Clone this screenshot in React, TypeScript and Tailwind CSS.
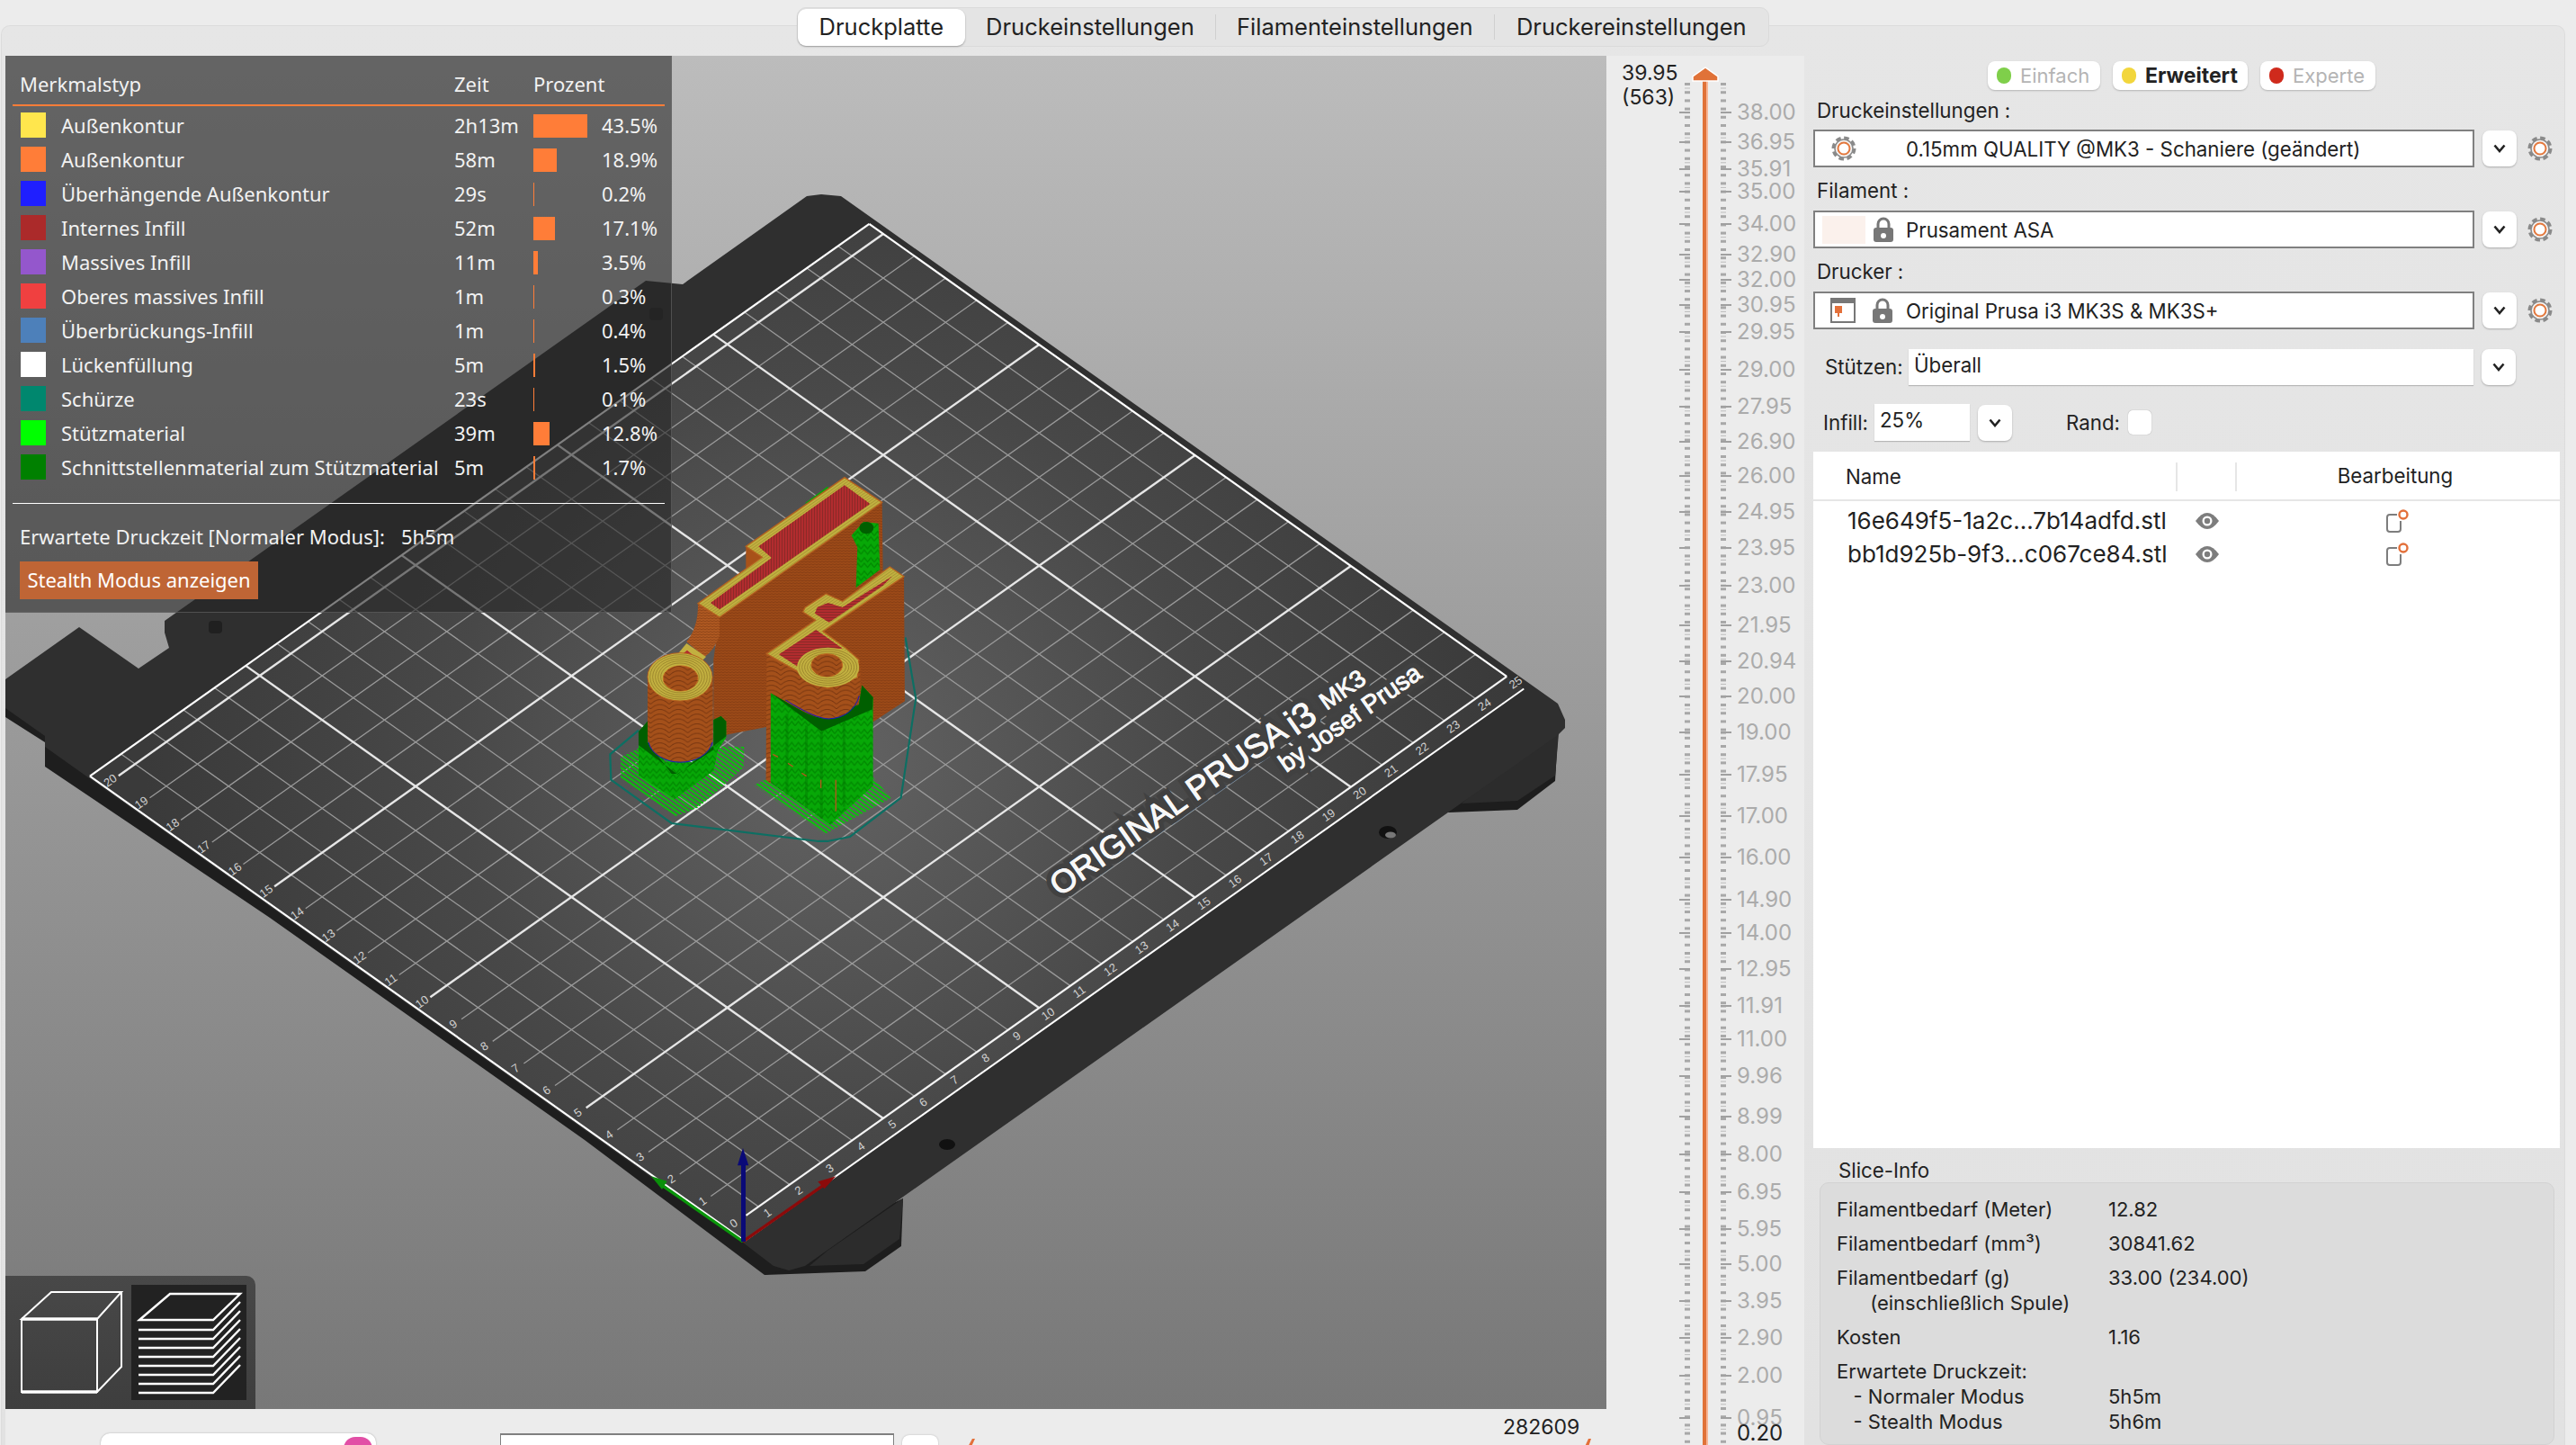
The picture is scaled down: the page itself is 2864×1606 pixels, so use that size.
import React from "react";

const AX = 808.7, AY = 1365.7;
const P = (x: number, y: number): [number, number] => [AX + x * 34.66 - y * 34.66, AY - x * 24.55 - y * 24.6];
const pts = (a: [number, number][]) => a.map((p) => p.join(",")).join(" ");
const L = ({ a, b, c, w }: { a: [number, number]; b: [number, number]; c: string; w: number }) => (
  <line x1={a[0]} y1={a[1]} x2={b[0]} y2={b[1]} stroke={c} strokeWidth={w} />
);
const range = (a: number, b: number) => Array.from({ length: b - a + 1 }, (_, i) => a + i);

const Rim = ({ cx, cy, rx, ry }: { cx: number; cy: number; rx: number; ry: number }) => (
  <g fill="none" stroke="#96802a" strokeWidth="2.5">
    {[0, 1, 2, 3, 4].map((i) => (
      <ellipse key={i} cx={cx} cy={cy} rx={rx - 8 - i * 9} ry={ry - 6 - i * 7} />
    ))}
  </g>
);

function Model() {
  return (
    <g transform="translate(620 500) scale(0.3333)">
      <polyline
        points="270,935 175,1015 178,1100 380,1245 870,1305 900,1305 975,1290 1145,1160 1190,860 1195,830 1160,625"
        fill="none"
        stroke="#0d6f63"
        strokeWidth="6.5"
      />
      <polygon points="210,1025 290,985 622,990 620,1060 470,1192 392,1222 210,1095" fill="url(#hatch)" />
      <polygon points="655,1118 690,1100 1050,1090 1112,1160 890,1282" fill="url(#hatch)" />
      <polygon points="825,178 900,122 905,128 840,182" fill="#0aa60a" />
      <polygon points="540,558 1082,175 1085,420 1085,700 1158,835 560,950 520,900 520,700" fill="#9c4a18" />
      <polygon points="540,558 1082,175 1085,420 1085,700 1158,835 560,950 520,900 520,700" fill="url(#wave)" />
      <path d="M980,285 L1020,240 L1070,245 L1075,400 L995,460 L1000,325 Z" fill="url(#sup)" />
      <ellipse cx="1030" cy="260" rx="24" ry="20" fill="#005f00" />
      <polygon points="628,322 682,358 628,397" fill="#a85219" />
      <path d="M468,512 L540,558 L540,620 Q520,670 490,690 L430,640 Q470,590 468,512 Z" fill="#b05a22" />
      <path d="M468,512 L540,558 L540,620 Q520,670 490,690 L430,640 Q470,590 468,512 Z" fill="url(#wave)" />
      <polygon points="957,92 628,322 682,358 468,512 540,558 1082,175" fill="url(#rimp)" stroke="#b5611f" strokeWidth="4" />
      <polygon points="957,118 670,322 714,360 510,510 540,532 1042,180" fill="#b22c2e" />
      <polygon points="957,118 670,322 714,360 510,510 540,532 1042,180" fill="url(#vred)" />

      <path d="M270,1085 L270,940 L300,905 L300,975 L360,1040 L450,1042 L520,985 L520,900 L545,888 L562,905 L562,960 L535,1000 L520,1070 L390,1165 Z" fill="url(#sup)" />
      <path d="M270,985 L270,940 L300,905 L300,975 L380,1080 L400,1080 L520,1000 L520,900 L545,888 L562,905 L562,955 L400,1082 Z" fill="#005f00" />
      <path d="M300,755 L300,960 A108,80 0 0 0 518,960 L518,755 Z" fill="#a4501a" />
      <path d="M300,755 L300,960 A108,80 0 0 0 518,960 L518,755 Z" fill="url(#arch)" />
      <path d="M303,975 A108,80 0 0 0 516,975" fill="none" stroke="#1818c0" strokeWidth="3" />
      <polygon points="378,708 430,645 495,690 455,730" fill="#c2b040" />
      <polygon points="382,708 432,668 470,700 445,712 410,703" fill="#b22c2e" />
      <ellipse cx="408" cy="757" rx="108" ry="80" fill="#c2b040" stroke="#b5611f" strokeWidth="3" />
      <Rim cx={408} cy={757} rx={108} ry={80} />
      <ellipse cx="410" cy="762" rx="58" ry="42" fill="#a4501a" stroke="#c46a20" strokeWidth="3" />
      <ellipse cx="410" cy="762" rx="58" ry="42" fill="url(#arch)" />

      <polygon points="885,605 1155,420 1158,838 1050,908 1000,760 960,640" fill="#9c4a18" />
      <polygon points="885,605 1155,420 1158,838 1050,908 1000,760 960,640" fill="url(#wave)" />
      <polygon points="710,810 880,890 1005,850 1015,785 1052,825 1052,1120 910,1250 710,1110" fill="url(#sup)" />
      <g stroke="#006f00" strokeWidth="9" opacity="0.35">
        <line x1="765" y1="880" x2="765" y2="1150" />
        <line x1="830" y1="920" x2="830" y2="1195" />
        <line x1="880" y1="940" x2="880" y2="1230" />
        <line x1="955" y1="910" x2="955" y2="1190" />
      </g>
      <polygon points="710,810 800,860 880,895 1005,850 1015,785 1052,825 1050,865 880,938" fill="#005f00" />
      <path d="M697,680 L695,1100 L710,1112 L710,810 L800,862 Q860,897 905,897 Q1002,890 1010,780 L1010,720 L900,660 Z" fill="#a4501a" />
      <path d="M697,680 L695,1100 L710,1112 L710,810 L800,862 Q860,897 905,897 Q1002,890 1010,780 L1010,720 L900,660 Z" fill="url(#arch)" />
      <path d="M760,834 Q860,897 905,897 Q985,892 1006,820" fill="none" stroke="#1818c0" strokeWidth="3" />
      <path d="M697,680 L860,568 L818,540 L826,525 L895,480 L950,505 L1108,390 L1155,422 L885,605 L960,660 L1005,700 L1000,760 L900,795 Z" fill="url(#rimp)" stroke="#b5611f" strokeWidth="4" />
      <polygon points="738,682 862,600 950,662 860,672 825,718 800,722" fill="#b22c2e" />
      <polygon points="738,682 862,600 950,662 860,672 825,718 800,722" fill="url(#hred)" />
      <polygon points="866,525 902,510 950,525 1115,422 1085,452 950,545 905,575 858,545" fill="#b22c2e" />
      <polygon points="866,525 902,510 950,525 1115,422 1085,452 950,545 905,575 858,545" fill="url(#hred)" />
      <ellipse cx="902" cy="725" rx="104" ry="66" fill="#c2b040" />
      <Rim cx={902} cy={725} rx={104} ry={66} />
      <ellipse cx="898" cy="718" rx="52" ry="38" fill="#a4501a" stroke="#c46a20" strokeWidth="3" />
      <ellipse cx="898" cy="718" rx="52" ry="38" fill="url(#arch)" />
      <g stroke="#b5561c" strokeWidth="4">
        <line x1="718" y1="1015" x2="735" y2="1024" />
        <line x1="768" y1="1045" x2="785" y2="1056" />
        <line x1="814" y1="1078" x2="830" y2="1088" />
        <line x1="878" y1="1100" x2="878" y2="1128" />
        <line x1="928" y1="1100" x2="928" y2="1205" />
      </g>
      <path d="M470,1192 L595,1105" stroke="#ffffff" strokeWidth="3" strokeDasharray="5 5" />
    </g>
  );
}

function Scene() {
  const corners: [number, number][] = [P(0, 20.45), P(25, 20.45), P(25, -0.55), P(0, -0.55)];
  const textStyle = { paintOrder: "stroke" as const, fontFamily: '"Liberation Sans", sans-serif' };
  const brand = [
    { t: "translate(1178 997) rotate(-35)", s: 36, txt: "ORIGINAL PRUSA", len: 312 },
    { t: "translate(1441 818) rotate(-35)", s: 40, txt: "i3" },
    { t: "translate(1475 790) rotate(-35)", s: 27, txt: "MK3" },
    { t: "translate(1430 859) rotate(-35)", s: 28, txt: "by Josef Prusa", len: 186 },
  ];
  return (
    <svg viewBox="6 62 1780 1504" className="absolute inset-0 h-[1504px] w-[1780px]">
      <defs>
        <radialGradient id="glow" gradientUnits="userSpaceOnUse" cx="920" cy="840" r="760">
          <stop offset="0" stopColor="#636363" />
          <stop offset="0.55" stopColor="#484848" />
          <stop offset="1" stopColor="#3a3a3a" />
        </radialGradient>
        <pattern id="hatch" width="12" height="12" patternUnits="userSpaceOnUse" patternTransform="rotate(35)">
          <rect width="12" height="6" fill="#0ac40a" />
        </pattern>
        <pattern id="sup" width="44" height="44" patternUnits="userSpaceOnUse">
          <rect width="44" height="44" fill="#07a807" />
          <path d="M0 22 L11 8 L22 22 L33 8 L44 22 M0 40 L11 26 L22 40 L33 26 L44 40" stroke="#018a01" strokeWidth="4" fill="none" />
        </pattern>
        <pattern id="wave" width="12" height="9" patternUnits="userSpaceOnUse">
          <path d="M0 6 L6 2 L12 6" stroke="#783610" strokeWidth="2" fill="none" />
        </pattern>
        <pattern id="arch" width="62" height="16" patternUnits="userSpaceOnUse">
          <path d="M0 16 Q31 -14 62 16" stroke="#783610" strokeWidth="3" fill="none" />
        </pattern>
        <pattern id="vred" width="9" height="9" patternUnits="userSpaceOnUse">
          <rect width="3" height="9" fill="#8a2a28" />
        </pattern>
        <pattern id="hred" width="9" height="9" patternUnits="userSpaceOnUse">
          <rect width="9" height="3" fill="#8a2a28" />
        </pattern>
        <pattern id="rimp" width="8" height="8" patternUnits="userSpaceOnUse" patternTransform="rotate(-35)">
          <rect width="8" height="8" fill="#c2b040" />
          <rect width="8" height="2" fill="#a09030" />
        </pattern>
      </defs>
      <polygon points="1611,903 1687,900 1729,868 1732,818 1600,900" fill="#1d1d1d" />
      <polygon points="1625,893 1687,890 1729,862 1733,815 1640,880" fill="#2c2c2c" />
      <polygon points="850,1417 962,1413 1002,1385 1004,1332 860,1400" fill="#1d1d1d" />
      <polygon points="900,1407 960,1405 1000,1377 1004,1332 920,1390" fill="#2c2c2c" />
      <polygon points="6,755 6,797 50,825 50,852 300,1020 650,1267 850,1417 900,1405 900,1370 100,800" fill="#1e1e1e" />
      <polygon
        points="897,218 913,216 935,218 1732,782 1740,800 1740,809 1732,817 895,1407 877,1412 860,1407 826,1381 50,830 50,818 6,787 6,755 88,697 154,743 188,720 183,703 183,690 718,312 759,316"
        fill="#2f2f2f"
      />
      <polygon points={pts(corners)} fill="url(#glow)" />
      {range(1, 24).filter((i) => i % 5).map((i) => (
        <L key={i} a={P(i, 0)} b={P(i, 20.45)} c="#9a9a9a" w={1.3} />
      ))}
      {range(1, 19).filter((i) => i % 5).map((i) => (
        <L key={i} a={P(0.47, i)} b={P(25, i)} c="#9a9a9a" w={1.3} />
      ))}
      {[5, 10, 15, 20].map((i) => (
        <L key={i} a={P(i, 0)} b={P(i, 20.45)} c="#e6e6e6" w={2.4} />
      ))}
      {[5, 10, 15, 20].map((i) => (
        <L key={i} a={P(0.47, i)} b={P(25, i)} c="#e6e6e6" w={2.4} />
      ))}
      <L a={P(0.6, 0)} b={P(25, 0)} c="#f4f4f4" w={2.2} />
      <L a={corners[0]} b={corners[1]} c="#ffffff" w={2.2} />
      <L a={corners[1]} b={P(25, 0)} c="#ffffff" w={2.2} />
      <L a={corners[0]} b={corners[3]} c="#ffffff" w={2.2} />
      <L a={corners[3]} b={corners[2]} c="#ffffff" w={2} />
      {range(1, 25).map((i) => {
        const [x, y] = P(i, -0.3);
        return (
          <text key={i} x={x} y={y} fontSize="13" fill="#d0d0d0" textAnchor="middle" dominantBaseline="middle" transform={`rotate(-35 ${x} ${y})`} style={textStyle}>
            {i}
          </text>
        );
      })}
      {range(0, 20).map((i) => {
        const [x, y] = P(0.22, i);
        return (
          <text key={i} x={x} y={y} fontSize="13" fill="#d0d0d0" textAnchor="middle" dominantBaseline="middle" transform={`rotate(-35 ${x} ${y})`} style={textStyle}>
            {i}
          </text>
        );
      })}
      <g fill="none" stroke="#414141" strokeWidth="12" style={textStyle} aria-hidden="true">
        {brand.map((b) => (
          <path key={b.txt} d="" />
        ))}
      </g>
      <g fill="#f8f8f8" strokeWidth="12" style={textStyle}>
        {brand.map((b) => (
          <text key={b.txt} transform={b.t} fontSize={b.s} textLength={b.len} lengthAdjust="spacingAndGlyphs" stroke="#414141">
            {b.txt}
          </text>
        ))}
      </g>
      <g fill="#f8f8f8" stroke="#f8f8f8" strokeWidth="0.9" style={textStyle} aria-hidden="true">
        {brand.map((b) => (
          <text key={b.txt} transform={b.t} fontSize={b.s} textLength={b.len} lengthAdjust="spacingAndGlyphs">
            {b.txt}
          </text>
        ))}
      </g>
      <ellipse cx="1543" cy="925" rx="10" ry="7" fill="#111" />
      <ellipse cx="1546" cy="928" rx="6" ry="3.5" fill="#777" />
      <ellipse cx="1053" cy="1272" rx="9" ry="6" fill="#111" />
      <rect x="232" y="690" width="15" height="14" rx="4" fill="#202020" />
      <rect x="722" y="342" width="15" height="14" rx="4" fill="#232323" />
      <Model />
      <g transform="translate(650 1150) scale(0.3333)">
        <line x1="528" y1="690" x2="258" y2="502" stroke="#0a960a" strokeWidth="10" />
        <polygon points="222,472 275,488 258,516" fill="#0a900a" />
        <line x1="528" y1="690" x2="795" y2="503" stroke="#8c0a0a" strokeWidth="10" />
        <polygon points="838,472 778,490 800,514" fill="#8c0a0a" />
        <rect x="522" y="430" width="15" height="260" fill="#0a0a78" />
        <polygon points="528,378 547,436 510,436" fill="#0a0a78" />
      </g>
    </svg>
  );
}

const legend = [
  ["#ffe64d", "Außenkontur", "2h13m", 60, "43.5%"],
  ["#ff7d38", "Außenkontur", "58m", 26, "18.9%"],
  ["#1f1fff", "Überhängende Außenkontur", "29s", 1, "0.2%"],
  ["#ab2a2a", "Internes Infill", "52m", 24, "17.1%"],
  ["#9457cc", "Massives Infill", "11m", 5, "3.5%"],
  ["#f04040", "Oberes massives Infill", "1m", 1, "0.3%"],
  ["#4d80ba", "Überbrückungs-Infill", "1m", 1, "0.4%"],
  ["#ffffff", "Lückenfüllung", "5m", 2, "1.5%"],
  ["#00876e", "Schürze", "23s", 1, "0.1%"],
  ["#00ff00", "Stützmaterial", "39m", 18, "12.8%"],
  ["#008000", "Schnittstellenmaterial zum Stützmaterial", "5m", 2, "1.7%"],
] as const;

function Legend() {
  return (
    <div className="absolute left-0 top-0 h-[619px] w-[741px] border-r border-b border-[#6a6a6a]/60 bg-[#252525]/[.585] font-['Noto_Sans',sans-serif] text-[22px] text-[#f2f2f2]">
      <div className="flex h-[54px] items-end pb-[8px] pl-[16px] leading-[30px]">
        <span className="w-[483px]">Merkmalstyp</span>
        <span className="w-[88px]">Zeit</span>
        <span>Prozent</span>
      </div>
      <div className="mx-[8px] h-[1.5px] w-[725px] bg-[#ff7d38]" />
      <div className="mt-[3px]">
        {legend.map(([c, name, time, w, pct]) => (
          <div key={name + time} className="flex h-[38px] items-center pl-[17px]">
            <div className="mb-[1px] h-[28px] w-[28px]" style={{ backgroundColor: c }} />
            <span className="ml-[17px] w-[437px] whitespace-nowrap">{name}</span>
            <span className="w-[88px]">{time}</span>
            <div className="w-[76px]">
              <div className="h-[26px] bg-[#ff7d38]" style={{ width: w }} />
            </div>
            <span>{pct}</span>
          </div>
        ))}
      </div>
      <div className="mx-[8px] mt-[20px] h-[1.5px] w-[725px] bg-white" />
      <div className="ml-[16px] mt-[16px] flex h-[40px] items-center whitespace-pre">
        <span className="w-[424px]">Erwartete Druckzeit [Normaler Modus]:</span>
        <span>5h5m</span>
      </div>
      <div className="ml-[16px] mt-[8px] flex h-[42px] w-[265px] items-center justify-center bg-[#bf6535] pb-[2px] text-white">Stealth Modus anzeigen</div>
    </div>
  );
}

function ViewToggle() {
  const layers = [1478, 1488, 1498, 1508, 1518, 1528, 1538, 1548];
  return (
    <div className="absolute bottom-0 left-0 h-[148px] w-[278px] rounded-tr-[10px] bg-gradient-to-b from-[#484848] to-[#3e3e3e]">
      <svg viewBox="6 1418 278 148" className="h-[148px] w-[278px]">
        <g fill="none" stroke="#fff">
          <path d="M24 1466 L57 1436 L135 1436 L108 1466 Z" strokeWidth="2" />
          <path d="M24 1466 L108 1466" strokeWidth="3.5" />
          <path d="M24 1466 L24 1547 L108 1547 L108 1466 M135 1436 L135 1519 L108 1547" strokeWidth="2" />
          <path d="M24 1547 L108 1547" strokeWidth="3.5" />
        </g>
        <rect x="146" y="1428" width="128" height="128" fill="#222" />
        <g fill="none" stroke="#fff" strokeWidth="2.4">
          <path d="M155 1467 L189 1438 L267 1438 L237 1467 Z" />
          {layers.map((y) => (
            <path key={y} d={`M154 ${y} L237 ${y} L267 ${y - 31}`} />
          ))}
        </g>
      </svg>
    </div>
  );
}

const sliderLabels: [string, number][] = [
  ["38.00", 124], ["36.95", 157], ["35.91", 187], ["35.00", 212], ["34.00", 248], ["32.90", 282], ["32.00", 310], ["30.95", 338], ["29.95", 368],
  ["29.00", 410], ["27.95", 451], ["26.90", 490], ["26.00", 528], ["24.95", 568], ["23.95", 608], ["23.00", 650], ["21.95", 694], ["20.94", 734],
  ["20.00", 773], ["19.00", 813], ["17.95", 860], ["17.00", 906], ["16.00", 952], ["14.90", 999], ["14.00", 1036], ["12.95", 1076], ["11.91", 1117],
  ["11.00", 1154], ["9.96", 1195], ["8.99", 1240], ["8.00", 1282], ["6.95", 1324], ["5.95", 1365], ["5.00", 1404], ["3.95", 1445], ["2.90", 1486],
  ["2.00", 1528], ["0.95", 1575],
];

function Slider() {
  const dashes = range(0, 166).map((i) => 92 + i * 9.2);
  return (
    <div className="relative h-[1544px] w-[220px] shrink-0 bg-[#ececec]">
      <svg viewBox="1786 62 220 1544" className="absolute inset-0 h-[1544px] w-[220px] font-['Inter',sans-serif]">
        {dashes.map((y, i) => (
          <g key={y} fill="#a8a8a8">
            <rect x="1873" y={y} width="6" height="3" />
            <rect x="1913" y={y} width="6" height="3" />
            {i % 3 === 0 && (
              <>
                <rect x="1873" y={y + 5.5} width="6" height="1" fill="#bdbdbd" />
                <rect x="1913" y={y + 5.5} width="6" height="1" fill="#bdbdbd" />
              </>
            )}
          </g>
        ))}
        {sliderLabels.map(([t, y]) => (
          <g key={t}>
            <rect x="1867" y={y} width="12" height="2" fill="#a0a0a0" />
            <rect x="1913" y={y} width="12" height="2" fill="#a0a0a0" />
            <text x="1931" y={y + 9} fontSize="24" fill="#ababab">{t}</text>
          </g>
        ))}
        <text x="1931" y="1601" fontSize="24" fill="#222">0.20</text>
        <rect x="1893" y="90" width="4" height="1516" fill="#e07238" />
        <rect x="1897" y="90" width="2" height="1516" fill="#f7b595" />
        <polygon points="1896,75 1882,85 1882,90 1910,90 1910,85" fill="#e07238" stroke="#fff" strokeWidth="1.5" />
        <text x="1803" y="89" fontSize="23" fill="#222">39.95</text>
        <text x="1803" y="116" fontSize="23" fill="#222">(563)</text>
      </svg>
    </div>
  );
}

const Gear = () => (
  <svg viewBox="0 0 28 28" className="h-[28px] w-[28px]">
    <circle cx="14" cy="14" r="11.5" fill="none" stroke="#8a8a8a" strokeWidth="4" strokeDasharray="5.5 3.5" />
    <circle cx="14" cy="14" r="10" fill="#f4f4f4" stroke="#8a8a8a" strokeWidth="1.5" />
    <circle cx="14" cy="14" r="6.5" fill="#fff" stroke="#e3783d" strokeWidth="2" />
  </svg>
);
const Lock = () => (
  <svg viewBox="0 0 24 28" className="h-[28px] w-[24px]">
    <path d="M6 13 V8 a6 6 0 0 1 12 0 V13" fill="none" stroke="#777" strokeWidth="3" />
    <rect x="1" y="12" width="22" height="16" rx="3" fill="#777" />
    <circle cx="12" cy="21" r="3" fill="#fff" />
  </svg>
);
const PrinterIcon = () => (
  <svg viewBox="0 0 28 28" className="h-[28px] w-[28px]">
    <rect x="1" y="1" width="26" height="26" fill="#fff" stroke="#777" strokeWidth="2" />
    <rect x="1" y="1" width="26" height="5" fill="#777" />
    <rect x="5" y="9" width="8" height="8" fill="#e3703a" />
    <rect x="8" y="17" width="2" height="4" fill="#e3703a" />
  </svg>
);
const Chevron = () => (
  <svg viewBox="0 0 14 10" className="h-[10px] w-[14px]">
    <path d="M1.5 1.5 L7 8 L12.5 1.5" fill="none" stroke="#222" strokeWidth="2.6" />
  </svg>
);
const Eye = () => (
  <svg viewBox="0 0 28 20" className="h-[20px] w-[28px]">
    <path d="M1 10 Q14 -8 27 10 Q14 28 1 10 Z" fill="#7d7d7d" />
    <circle cx="14" cy="10" r="5.5" fill="#fff" />
    <circle cx="14" cy="10" r="3.2" fill="#7d7d7d" />
  </svg>
);
const EditIcon = () => (
  <svg viewBox="0 0 28 26" className="h-[26px] w-[28px]">
    <path d="M14 6 H6 a3 3 0 0 0 -3 3 V22 a3 3 0 0 0 3 3 H15 a3 3 0 0 0 3 -3 V13" fill="none" stroke="#7d7d7d" strokeWidth="2" />
    <circle cx="21" cy="6" r="4.5" fill="#fff" stroke="#e3703a" strokeWidth="2.4" />
  </svg>
);

const DropBtn = ({ h = "h-[40px]" }: { h?: string }) => (
  <button className={`ml-[9px] flex w-[38px] items-center justify-center rounded-[8px] bg-white shadow-[0_1px_2px_rgba(0,0,0,0.25)] ${h}`}>
    <Chevron />
  </button>
);

function Preset({ icon, text }: { icon: React.ReactNode; text: string }) {
  return (
    <div className="flex items-center">
      <div className="flex h-[42px] w-[735px] items-center border-[2.5px] border-[#808080] bg-white text-[22.3px] leading-none">
        <div className="flex h-full w-[101px] shrink-0 items-center">{icon}</div>
        <span className="pt-[2px]">{text}</span>
      </div>
      <DropBtn />
      <div className="ml-[12px]">
        <Gear />
      </div>
    </div>
  );
}

const Mode = ({ dot, text, active, w }: { dot: string; text: string; active?: boolean; w: string }) => (
  <div className={`flex h-[32px] items-center gap-[10px] rounded-[8px] bg-white pl-[10px] shadow-[0_1px_2px_rgba(0,0,0,0.22)] ${w} ${active ? "text-[23px] font-bold text-[#222]" : "text-[22px] text-[#b4b4b4]"}`}>
    <span className={`h-[18px] w-[16px] shrink-0 rounded-full ${dot}`} />
    {text}
  </div>
);

const info: [string, string, string][] = [
  ["Filamentbedarf (Meter)", "12.82", ""],
  ["Filamentbedarf (mm³)", "30841.62", "mt-[10px]"],
  ["Filamentbedarf (g)", "33.00 (234.00)", "mt-[10px]"],
  ["      (einschließlich Spule)", "", ""],
  ["Kosten", "1.16", "mt-[10px]"],
  ["Erwartete Druckzeit:", "", "mt-[10px]"],
  ["   - Normaler Modus", "5h5m", ""],
  ["   - Stealth Modus", "5h6m", ""],
];

function RightPanel() {
  return (
    <div className="flex h-[1544px] w-[846px] shrink-0 flex-col overflow-hidden pl-[10px] text-[22.3px] leading-none text-[#222]">
      <div className="ml-[194px] mt-[6px] flex gap-[14px]">
        <Mode dot="bg-[#7fcf4a]" text="Einfach" w="w-[125px]" />
        <Mode dot="bg-[#f2d63c]" text="Erweitert" active w="w-[150px]" />
        <Mode dot="bg-[#cf2a1c]" text="Experte" w="w-[128px]" />
      </div>
      <div className="flex h-[44px] items-center pl-[4px] pt-[2px]">Druckeinstellungen :</div>
      <Preset text="0.15mm QUALITY @MK3 - Schaniere (geändert)" icon={<div className="ml-[18px]"><Gear /></div>} />
      <div className="flex h-[48px] items-center pl-[4px] pt-[5px]">Filament :</div>
      <Preset
        text="Prusament ASA"
        icon={
          <div className="ml-[8px] flex items-center gap-[8px]">
            <div className="h-[31px] w-[48px] bg-[#fbf1ec]" />
            <Lock />
          </div>
        }
      />
      <div className="flex h-[48px] items-center pl-[4px] pt-[4px]">Drucker :</div>
      <Preset
        text="Original Prusa i3 MK3S & MK3S+"
        icon={
          <div className="ml-[17px] flex items-center gap-[18px]">
            <PrinterIcon />
            <Lock />
          </div>
        }
      />
      <div className="mt-[22px] flex h-[40px] items-center pl-[13px]">
        <span className="w-[93px]">Stützen:</span>
        <div className="h-[40px] w-[628px] bg-white pl-[6px] pt-[7px] shadow-[0_1px_1px_rgba(0,0,0,0.2)]">Überall</div>
        <DropBtn />
      </div>
      <div className="mt-[21px] flex h-[41px] items-center pl-[11px]">
        <span className="w-[57px] pt-[1px]">Infill:</span>
        <div className="h-[41px] w-[106px] bg-white pl-[6px] pt-[7px] shadow-[0_1px_1px_rgba(0,0,0,0.2)]">25%</div>
        <DropBtn />
        <span className="ml-[60px] w-[69px] pt-[1px]">Rand:</span>
        <div className="h-[27px] w-[26px] rounded-[5px] bg-white shadow-[0_0_1px_rgba(0,0,0,0.4)]" />
      </div>
      <div className="mt-[12px] h-[774px] w-[830px] bg-white">
        <div className="flex h-[55px] items-center border-b-2 border-[#e6e6e6] pt-[2px]">
          <span className="w-[405px] border-r-2 border-[#e6e6e6] py-[6px] pl-[36px] leading-[20px]">Name</span>
          <span className="h-[32px] w-[66px] border-r-2 border-[#e6e6e6]" />
          <span className="w-[352px] text-center">Bearbeitung</span>
        </div>
        {["16e649f5-1a2c...7b14adfd.stl", "bb1d925b-9f3...c067ce84.stl"].map((n, i) => (
          <div key={n} className={`flex h-[37px] items-center ${i === 0 ? "mt-[3px]" : ""}`}>
            <span className="w-[424px] pl-[38px] text-[26px]">{n}</span>
            <Eye />
            <div className="ml-[183px]">
              <EditIcon />
            </div>
          </div>
        ))}
      </div>
      <div className="ml-[28px] mt-[17px] h-[21px] leading-[16px]">Slice-Info</div>
      <div className="ml-[7px] w-[817px] grow rounded-[10px] border border-[#d2d2d2] bg-[#dcdcdc] pl-[18px] pt-[15px] text-[22px]">
        {info.map(([k, v, m]) => (
          <div key={k} className={`flex h-[28px] items-center whitespace-pre ${m}`}>
            <span className="w-[302px]">{k}</span>
            <span>{v}</span>
          </div>
        ))}
      </div>
    </div>
  );
}

function BottomStrip() {
  return (
    <div className="flex h-[40px] items-start overflow-hidden bg-[#ececec] font-['Inter',sans-serif]">
      <div className="relative ml-[106px] mt-[27px] h-[30px] w-[306px] rounded-[10px] bg-white shadow-[0_0_2px_rgba(0,0,0,0.3)]">
        <span className="absolute right-[4px] top-[4px] h-[26px] w-[32px] rounded-full bg-[#e24fa6]" />
      </div>
      <div className="ml-[138px] mt-[27px] h-[30px] w-[438px] border-x border-t-2 border-[#808080] bg-white" />
      <div className="ml-[9px] mt-[29px] h-[30px] w-[40px] rounded-[8px] bg-white shadow-[0_0_2px_rgba(0,0,0,0.25)]" />
      <svg viewBox="0 0 12 12" className="ml-[30px] mt-[32px] h-[12px] w-[12px]">
        <path d="M2 12 L8 1 L11 1 L6 12 Z" fill="#e3703a" />
      </svg>
      <span className="ml-[586px] mt-[5px] text-[23px] leading-[30px] text-[#222]">282609</span>
      <svg viewBox="0 0 10 10" className="ml-[4px] mt-[32px] h-[10px] w-[10px]">
        <path d="M2 10 L6 1 L9 1 L6 10 Z" fill="#e3703a" />
      </svg>
    </div>
  );
}

export default function App() {
  return (
    <div className="relative h-[1606px] w-[2864px] overflow-hidden bg-[#ececec] font-['Inter',sans-serif]">
      <div className="absolute left-[886px] top-[8px] z-10 flex h-[44px] w-[1081px] items-center rounded-[10px] border border-[#dadada] bg-[#e4e4e4] text-[25.5px] leading-none text-[#222]">
        <div className="flex h-[41px] w-[186px] items-center justify-center rounded-[9px] bg-white shadow-[0_1px_2px_rgba(0,0,0,0.3)]">Druckplatte</div>
        <div className="flex w-[279px] justify-center">Druckeinstellungen</div>
        <div className="h-[28px] w-px bg-[#d0d0d0]" />
        <div className="flex w-[309px] justify-center">Filamenteinstellungen</div>
        <div className="h-[28px] w-px bg-[#d0d0d0]" />
        <div className="flex w-[305px] justify-center">Druckereinstellungen</div>
      </div>
      <div className="ml-[1px] mt-[28px] h-[1578px] w-[2851px] rounded-t-[10px] border border-b-0 border-[#dcdcdc] bg-gradient-to-b from-[#e6e6e6] to-[#e2e2e2] pl-[4px] pt-[33px]">
        <div className="flex">
          <div className="w-[1780px] shrink-0">
            <div className="relative h-[1504px] w-[1780px] overflow-hidden bg-gradient-to-b from-[#bcbcbc] to-[#787878]">
              <Scene />
              <Legend />
              <ViewToggle />
            </div>
            <BottomStrip />
          </div>
          <Slider />
          <RightPanel />
        </div>
      </div>
    </div>
  );
}
